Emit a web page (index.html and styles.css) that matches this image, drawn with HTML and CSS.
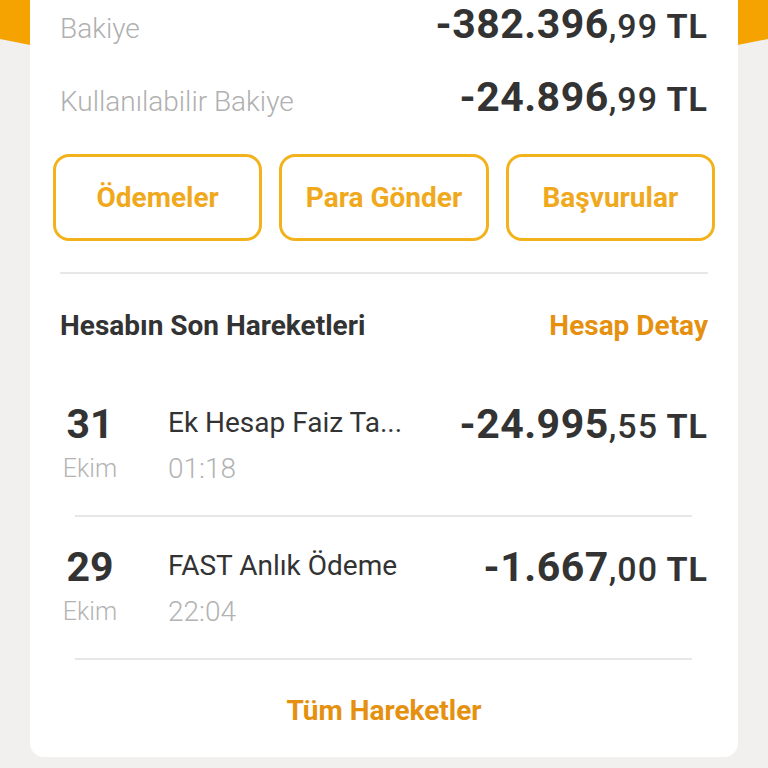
FILE: index.html
```html
<!DOCTYPE html>
<html lang="tr">
<head>
  <meta charset="UTF-8" />
  <meta name="viewport" content="width=device-width, initial-scale=1.0" />
  <title>Hesap Özeti</title>
  <link rel="stylesheet" href="styles.css">
</head>
<body>
  <div class="band"></div>

  <div class="card">
    <div class="balance">
      <span class="balance-label">Bakiye</span>
      <span class="amount">-382.396<span class="frac">,99</span><span class="cur"> TL</span></span>
    </div>
    <div class="balance balance-2">
      <span class="balance-label">Kullanılabilir Bakiye</span>
      <span class="amount">-24.896<span class="frac">,99</span><span class="cur"> TL</span></span>
    </div>

    <div class="actions">
      <button class="action">Ödemeler</button>
      <button class="action">Para Gönder</button>
      <button class="action">Başvurular</button>
    </div>

    <div class="divider"></div>

    <div class="section-head">
      <span class="section-title">Hesabın Son Hareketleri</span>
      <a class="link" href="#">Hesap Detay</a>
    </div>

    <div class="tx-list">
      <div class="tx">
        <div class="tx-date">
          <span class="day">31</span>
          <span class="month">Ekim</span>
        </div>
        <div class="tx-info">
          <span class="tx-name">Ek Hesap Faiz Ta...</span>
          <span class="tx-time">01:18</span>
        </div>
        <span class="amount">-24.995<span class="frac">,55</span><span class="cur"> TL</span></span>
      </div>
      <hr class="tx-sep">
      <div class="tx">
        <div class="tx-date">
          <span class="day">29</span>
          <span class="month">Ekim</span>
        </div>
        <div class="tx-info">
          <span class="tx-name">FAST Anlık Ödeme</span>
          <span class="tx-time">22:04</span>
        </div>
        <span class="amount">-1.667<span class="frac">,00</span><span class="cur"> TL</span></span>
      </div>
      <hr class="tx-sep">
    </div>

    <a class="all-link" href="#">Tüm Hareketler</a>
  </div>
</body>
</html>
```

FILE: styles.css
```css
body { margin: 0; background: #f1f0ee; font-family: Roboto, "Noto Sans", sans-serif; color: #333; position: relative; min-height: 768px; }
.band { position: absolute; top: 0; left: 0; right: 0; height: 120px; background: #f5a300; clip-path: polygon(0 0, 100% 0, 100% 39px, 50% 115px, 0 39px); }
.card { position: relative; margin: 0 30px; background: #fff; border-radius: 0 0 14px 14px; padding: 0 30px; height: 757px; box-sizing: border-box; }

.balance { display: flex; justify-content: space-between; align-items: baseline; height: 48px; line-height: 48px; }
.balance-2 { margin-top: 25px; }
.balance-label { font-size: 28px; font-weight: 300; color: #b0b0b0; }
.amount { font-size: 41px; font-weight: 700; color: #333; white-space: nowrap; letter-spacing: 0.5px; }
.frac { font-size: 34px; font-weight: 500; letter-spacing: 1px; }
.cur { font-size: 34px; font-weight: 700; letter-spacing: 1px; }

.actions { display: flex; gap: 17px; margin: 33px -7px 0; }
.action { flex: 1; height: 87px; background: #fff; border: 3px solid #f2b21c; border-radius: 16px; font-family: inherit; font-size: 28px; font-weight: 700; color: #f0a91d; cursor: pointer; }

.divider { height: 2px; background: #e7e7e7; margin-top: 31px; }

.section-head { display: flex; justify-content: space-between; align-items: baseline; margin-top: 37px; line-height: 30px; }
.section-title { font-size: 28px; font-weight: 700; color: #333; }
.link { font-size: 28px; font-weight: 700; color: #e5910f; text-decoration: none; }

.tx-list { margin-top: 33px; }
.tx { display: flex; align-items: flex-start; padding: 28px 0 31px; height: 82px; }
.tx-date { width: 60px; display: flex; flex-direction: column; align-items: center; }
.day { font-size: 41px; font-weight: 700; line-height: 44px; }
.month { font-size: 25px; font-weight: 300; color: #b3b3b3; line-height: 36px; margin-top: 5px; }
.tx-info { flex: 1; display: flex; flex-direction: column; margin: 4px 0 0 48px; gap: 12px; }
.tx-name { font-size: 28px; line-height: 34px; color: #333; }
.tx-time { font-size: 28px; font-weight: 300; line-height: 34px; color: #b3b3b3; }
.tx .amount { line-height: 44px; }
.tx-sep { margin: 0 16px 0 15px; border: none; height: 2px; background: #e7e7e7; }

.all-link { display: block; text-align: center; font-size: 28px; font-weight: 700; color: #e5910f; text-decoration: none; margin-top: 35px; line-height: 32px; }
```
